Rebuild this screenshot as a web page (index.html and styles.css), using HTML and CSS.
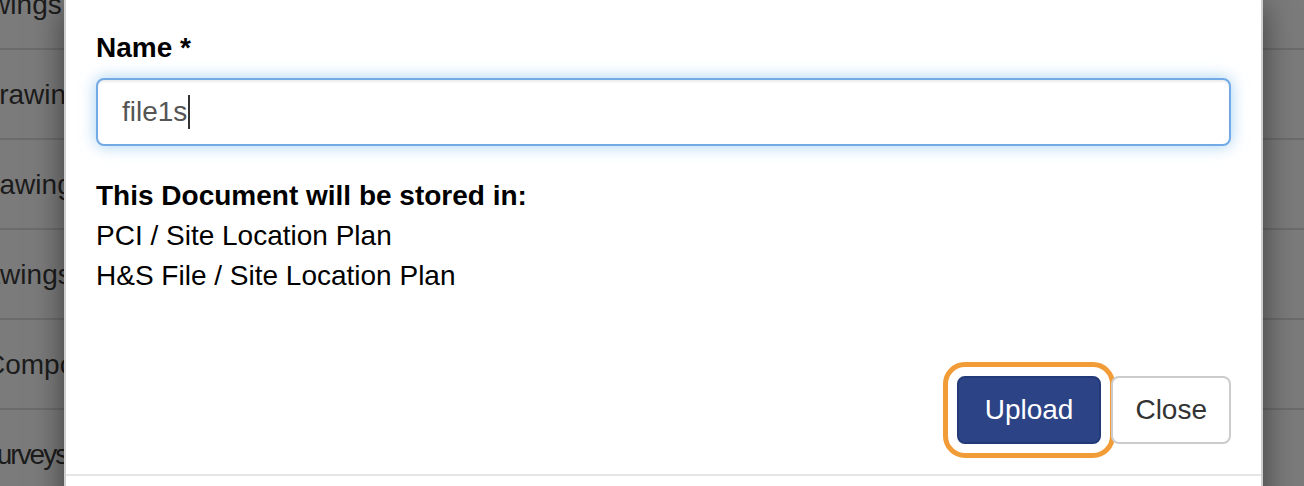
FILE: index.html
```html
<!DOCTYPE html>
<html lang="en">
<head>
<meta charset="utf-8">
<title>Upload document</title>
<link rel="stylesheet" href="styles.css">
</head>
<body>
  <div class="page">
    <ul class="rows">
      <li class="row"><span class="cell cell-a">Drawings</span></li>
      <li class="row"><span class="cell cell-b">Drawings</span></li>
      <li class="row"><span class="cell cell-c">Drawings</span></li>
      <li class="row"><span class="cell cell-d">Drawings</span></li>
      <li class="row"><span class="cell cell-e">Components</span></li>
      <li class="row"><span class="cell cell-f">Surveys</span></li>
    </ul>
  </div>

  <div class="modal">
    <div class="modal-body">
      <div class="form-group">
        <label class="label">Name *</label>
        <div class="form-control">file1s<span class="caret"></span></div>
      </div>
      <p class="store">
        <strong>This Document will be stored in:</strong><br>
        PCI / Site Location Plan<br>
        H&amp;S File / Site Location Plan
      </p>
    </div>
    <div class="modal-footer">
      <button class="btn btn-primary" type="button">Upload</button>
      <button class="btn btn-default btn-close" type="button">Close</button>
    </div>
  </div>
</body>
</html>
```

FILE: styles.css
```css
* { box-sizing: border-box; }

html, body {
  margin: 0;
  height: 486px;
  overflow: hidden;
}

body {
  position: relative;
  background: #7b7b7b;
  font-family: "Liberation Sans", Arial, Helvetica, sans-serif;
  font-size: 28px;
  line-height: 40px;
  color: #000;
}

/* underlying page, dimmed by the backdrop */
.page {
  margin-top: -40px;
}

.rows {
  list-style: none;
  margin: 0;
  padding: 0;
}

.row {
  height: 90px;
  padding-top: 25px;
  border-bottom: 2px solid #6c6c6c;
  overflow: hidden;
  white-space: nowrap;
  color: #1c1c1c;
}

.cell { display: inline-block; }
.cell-a { margin-left: -55px; }
.cell-b { margin-left: -21px; }
.cell-c { margin-left: -30px; }
.cell-d { margin-left: -45px; }
.cell-e { margin-left: -15px; }
.cell-f { margin-left: -20px; letter-spacing: -2px; }

/* modal dialog over the page */
.modal {
  position: absolute;
  left: 64px;
  top: -4px;
  width: 1199px;
  height: 560px;
  background: #fff;
  border: 2px solid #cfcfcf;
  box-shadow: 0 10px 30px rgba(0, 0, 0, 0.5);
}

.modal-body {
  padding: 30px;
}

.form-group {
  margin-bottom: 30px;
}

.label {
  display: block;
  font-weight: bold;
  margin-bottom: 10px;
}

.form-control {
  height: 68px;
  padding: 12px 24px;
  border: 2px solid #72aae6;
  border-radius: 8px;
  color: #555;
  background: #fff;
  box-shadow: inset 0 2px 2px rgba(0, 0, 0, 0.075), 0 0 16px rgba(102, 175, 233, 0.6);
  white-space: nowrap;
}

.caret {
  display: inline-block;
  width: 2px;
  height: 34px;
  margin-left: 1px;
  background: #333;
  vertical-align: -8px;
}

.store {
  margin: 0 0 20px;
}

.modal-footer {
  padding: 30px;
  border-bottom: 2px solid #e5e5e5;
  display: flex;
  justify-content: flex-end;
  gap: 10px;
}

.btn {
  font-family: inherit;
  font-size: 28px;
  line-height: 40px;
  height: 68px;
  padding: 12px 26px;
  border-radius: 8px;
  border: 2px solid transparent;
  cursor: pointer;
}

.btn-primary {
  background: #2c4486;
  border-color: #233a78;
  color: #fff;
  outline: 5px solid #f29c38;
  outline-offset: 9px;
}

.btn-default {
  background: #fff;
  border-color: #cccccc;
  color: #333;
}

.btn-close {
  padding: 12px 22px;
}
```
